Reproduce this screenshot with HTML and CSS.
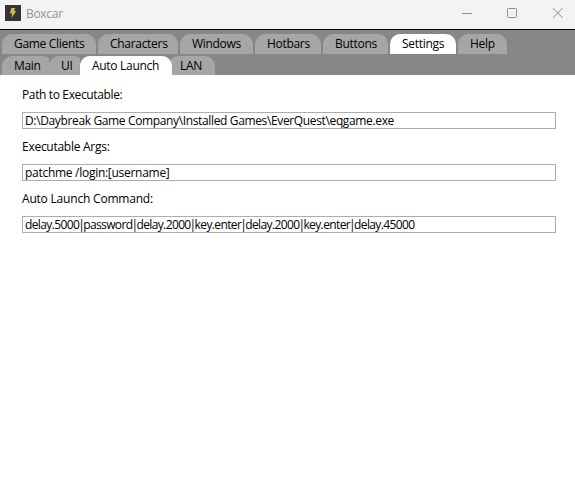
FILE: index.html
```
<!DOCTYPE html>
<html lang="en">
<head>
<meta charset="utf-8">
<title>Boxcar</title>
<link rel="stylesheet" href="styles.css">
</head>
<body>
<header class="titlebar">
  <svg class="app-icon" width="16" height="16" viewBox="0 0 16 16"><rect width="16" height="16" fill="#35343a"/><path d="M6.2 3H10.2L9 6H11.2L6.6 13L7.2 8.6H5Z" fill="#c9c23c"/></svg>
  <h1 class="title">Boxcar</h1>
  <svg class="controls" width="113" height="29" viewBox="0 0 113 29" fill="none" stroke="#8f8f8f"><path d="M0 13.5H10"/><rect x="45.5" y="8.5" width="9" height="9" rx="1"/><path d="M91 8.2L100.6 17.8M100.6 8.2L91 17.8"/></svg>
</header>
<nav class="tabs main-tabs">
  <a class="tab clients">Game Clients</a>
  <a class="tab characters">Characters</a>
  <a class="tab windows">Windows</a>
  <a class="tab hotbars">Hotbars</a>
  <a class="tab buttons">Buttons</a>
  <a class="tab settings active">Settings</a>
  <a class="tab help">Help</a>
</nav>
<nav class="tabs sub-tabs">
  <a class="tab general">Main</a>
  <a class="tab ui">UI</a>
  <a class="tab launch active">Auto Launch</a>
  <a class="tab lan">LAN</a>
</nav>
<main class="form">
  <label class="label path-label">Path to Executable:</label>
  <div class="field path">D:\Daybreak Game Company\Installed Games\EverQuest\eqgame.exe</div>
  <label class="label args-label">Executable Args:</label>
  <div class="field args">patchme /login:[username]</div>
  <label class="label command-label">Auto Launch Command:</label>
  <div class="field command">delay.5000<span class="pipe">|</span>password<span class="pipe">|</span>delay.2000<span class="pipe">|</span>key.enter<span class="pipe">|</span>delay.2000<span class="pipe">|</span>key.enter<span class="pipe">|</span>delay.45000</div>
</main>
</body>
</html>
```
FILE: styles.css
```
* { box-sizing: border-box; }
body {
  margin: 0;
  height: 485px;
  overflow: hidden;
  background: #fff;
  color: #000;
  font: 12px/16px "Open Sans", "Noto Sans", sans-serif;
  letter-spacing: -0.3px;
  white-space: nowrap;
}
.titlebar {
  display: flex;
  align-items: flex-start;
  height: 30px;
  background: #f3f3f3;
  border-bottom: 1px solid #000;
}
.app-icon { margin: 5px 5px 0; }
.title {
  margin: 6px 0 0;
  font-size: 12px;
  font-weight: 400;
  color: #929292;
}
.controls { margin-left: auto; }
.tabs { display: flex; background: #878787; padding-left: 2px; }
.main-tabs { height: 25px; padding-top: 4px; gap: 2px; }
.sub-tabs { height: 20px; padding-top: 1px; }
.tab {
  height: 20px;
  border-radius: 10px 10px 0 0;
  background: #a6a6a6;
  padding-left: 12px;
  line-height: 20px;
}
.sub-tabs .tab { height: 19px; }
.sub-tabs .tab + .tab { margin-left: -4px; }
.tab.active { position: relative; background: #fff; }
.sub-tabs .ui {
  border-radius: 0 10px 0 0;
  background: radial-gradient(circle at 10px 10px, #a6a6a6 9.5px, #878787 10.5px) 0 0 / 10px 10px no-repeat,
    linear-gradient(#a6a6a6, #a6a6a6) 0 10px / 10px 9px no-repeat,
    linear-gradient(#a6a6a6, #a6a6a6) 10px 0 / 25px 19px no-repeat;
}
.sub-tabs .launch {
  border-radius: 0 10px 0 0;
  background: radial-gradient(circle at 10px 10px, #fff 9.5px, #878787 10.5px) 0 0 / 10px 10px no-repeat,
    linear-gradient(#fff, #fff) 0 10px / 10px 9px no-repeat,
    linear-gradient(#fff, #fff) 10px 0 / 82px 19px no-repeat;
}
.clients { width: 94px; }
.characters { width: 80px; }
.windows { width: 73px; }
.hotbars { width: 66px; }
.buttons { width: 65px; }
.settings { width: 66px; }
.help { width: 49px; }
.general { width: 51px; }
.ui { width: 35px; }
.launch { width: 92px; }
.lan { width: 47px; }
.form { padding: 12px 19px 0 22px; }
.label { display: block; height: 16px; margin-bottom: 9px; }
.path-label { letter-spacing: -0.36px; }
.args-label { letter-spacing: -0.27px; }
.command-label { letter-spacing: -0.2px; }
.field {
  height: 17px;
  margin-bottom: 10px;
  padding-left: 2px;
  border: 1px solid #abadb3;
  line-height: 16px;
}
.path { letter-spacing: -0.36px; }
.args { letter-spacing: -0.28px; }
.command { letter-spacing: -0.62px; }
.pipe { margin: 0 -1px; }
```
